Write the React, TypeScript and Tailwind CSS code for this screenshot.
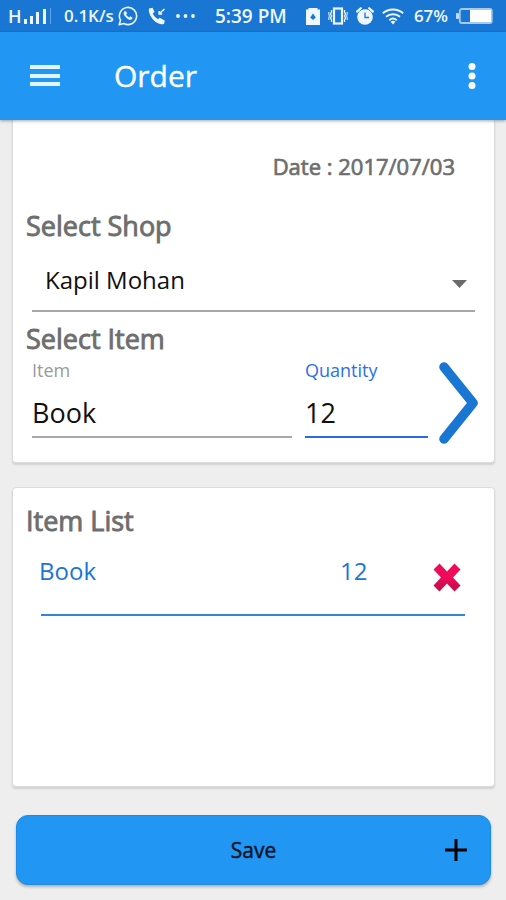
import React, { useState } from "react";

function SignalIcon() {
  return (
    <svg width="30" height="18" viewBox="0 0 30 18" fill="currentColor" aria-hidden="true">
      <rect x="2" y="12" width="3" height="5" />
      <rect x="8" y="9" width="3" height="8" />
      <rect x="14" y="5" width="3" height="12" />
      <rect x="21" y="2" width="3" height="15" />
      <rect x="28" y="1" width="1" height="16" opacity="0.35" />
    </svg>
  );
}

function WhatsAppIcon() {
  return (
    <svg width="20" height="20" viewBox="0 0 20 20" fill="none" stroke="currentColor" aria-hidden="true">
      <path d="M1.2 18.8l1.3-4.6a8.6 8.6 0 1 1 3.3 3.3z" strokeWidth="1.6" strokeLinejoin="round" />
      <path
        d="M6.6 5.4c-1.6 1.5-.6 3.8 1.4 5.9s4.500 3.200 6 1.500l.3-1-2-1.200-1.100 1c-1.500-.6-2.600-1.700-3.200-3.100l.9-1-.9-2.100z"
        fill="currentColor"
        strokeWidth="0.4"
      />
    </svg>
  );
}

function MissedCallIcon() {
  return (
    <svg width="18" height="18" viewBox="0 0 18 18" fill="none" stroke="currentColor" aria-hidden="true">
      <path
        d="M1 1.500L4.500.8l2 4-1.700 1.700c1 2.400 2.800 4.400 5.200 5.700l1.700-1.400 5 2.700-.6 3.200c-1 .8-2.500.8-4 .4C6.500 15.500 1.500 9.500.8 3.500z"
        fill="currentColor"
        stroke="none"
      />
      <path d="M16.500 2L11.500 6.500M11.200 4v3h3" strokeWidth="1.600" />
    </svg>
  );
}

function DataSaverIcon() {
  return (
    <svg width="14" height="18" viewBox="0 0 14 18" aria-hidden="true">
      <path d="M2.500 1h9v1.500H14V18H0V2.500h2.500z" fill="currentColor" />
      <path d="M7 6.500L9.800 10.500 7 13 4.200 10.500z" fill="#1976d2" />
    </svg>
  );
}

function VibrateIcon() {
  return (
    <svg width="20" height="18" viewBox="0 0 20 18" fill="none" stroke="currentColor" aria-hidden="true">
      <rect x="6" y="1.500" width="8" height="15" strokeWidth="2.200" />
      <path d="M3.500 3v2l-1 2 1 2-1 2 1 2v2M16.500 3v2l1 2-1 2 1 2-1 2v2" strokeWidth="1.300" />
      <path d="M.8 5v2l.6 2-.6 2v2M19.200 5v2l-.6 2 .6 2v2" strokeWidth="1" />
    </svg>
  );
}

function AlarmIcon() {
  return (
    <svg width="18" height="18" viewBox="0 0 18 18" fill="none" aria-hidden="true">
      <circle cx="9" cy="10" r="7.800" fill="currentColor" />
      <path d="M1 4.600L4.800 1.200M17 4.600l-3.800-3.400" stroke="currentColor" strokeWidth="2.200" strokeLinecap="round" />
      <path d="M9 5.500V10.500h4" stroke="#1976d2" strokeWidth="1.300" />
    </svg>
  );
}

function WifiIcon() {
  return (
    <svg width="22" height="17" viewBox="0 0 22 17" fill="none" stroke="currentColor" aria-hidden="true">
      <path d="M.8 5.200c5.800-5 14.600-5 20.400 0M4 8.800c4-3.500 10-3.500 14 0M7.300 12.200c2.200-1.900 5.200-1.900 7.400 0" strokeWidth="1.900" />
      <path d="M8.600 13.700c1.500-1.200 3.300-1.200 4.800 0L11 16.500z" fill="currentColor" stroke="none" />
    </svg>
  );
}

function BatteryIcon() {
  return (
    <svg width="37" height="16" viewBox="0 0 37 16" aria-hidden="true">
      <rect x="0" y="5" width="3" height="6" rx="1" fill="#bbdefb" />
      <rect x="3.800" y="1" width="32" height="14" rx="2" fill="none" stroke="#a9c8f0" strokeWidth="1.800" />
      <rect x="14" y="2" width="21" height="12" fill="#fff" />
    </svg>
  );
}

function StatusBar() {
  return (
    <div className="flex h-8 items-center justify-between bg-[#1976d2] pr-[13px] pl-2 text-[17px] font-semibold text-[#eef6ff]">
      <div className="flex items-center">
        <span className="w-3.5 text-lg">H</span>
        <SignalIcon />
        <span className="mr-1 ml-3">0.1K/s</span>
        <WhatsAppIcon />
        <span className="ml-2.5 flex items-center gap-2.5">
          <MissedCallIcon />
          <svg width="20" height="4" viewBox="0 0 20 4" fill="currentColor" aria-hidden="true">
            <circle cx="2" cy="2" r="1.900" />
            <circle cx="9.500" cy="2" r="1.900" />
            <circle cx="17" cy="2" r="1.900" />
          </svg>
        </span>
      </div>
      <span className="text-[19px]">5:39 PM</span>
      <div className="flex items-center gap-2">
        <DataSaverIcon />
        <VibrateIcon />
        <AlarmIcon />
        <WifiIcon />
        <span className="ml-0.5">67%</span>
        <BatteryIcon />
      </div>
    </div>
  );
}

function AppBar() {
  return (
    <header className="z-10 flex h-[88px] items-center bg-[#2196f3] pr-[23px] pl-[30px] text-white shadow-[0_1px_3px_rgba(0,0,0,0.35)]">
      <button type="button" aria-label="Open menu" className="text-[#e3f5ff]">
        <svg width="30" height="22" viewBox="0 0 30 22" fill="currentColor">
          <rect y="0" width="30" height="4" />
          <rect y="9" width="30" height="4" />
          <rect y="17" width="30" height="4" />
        </svg>
      </button>
      <h1 className="ml-[54px] flex-1 text-[30px] leading-10 [-webkit-text-stroke:0.4px]">Order</h1>
      <button type="button" aria-label="More options">
        <svg width="22" height="28" viewBox="0 0 22 28" fill="currentColor">
          <circle cx="11" cy="4.500" r="3.500" />
          <circle cx="11" cy="14" r="3.500" />
          <circle cx="11" cy="23.500" r="3.500" />
        </svg>
      </button>
    </header>
  );
}

const heading = "text-[27px] leading-9 text-[#6e6e6e] [-webkit-text-stroke:0.9px]";
const card = "mr-[11px] ml-3 border border-[#dcdcdc] bg-white shadow-[0_2px_2px_rgba(0,0,0,0.12)]";
const field = "h-[55px] w-full border-b-2 pt-1.5 text-[27px] text-[#111] outline-none";

export default function App() {
  const [item, setItem] = useState("Book");
  const [quantity, setQuantity] = useState("12");
  const items = [{ name: "Book", quantity: 12 }];

  return (
    <div className="flex min-h-screen flex-col bg-[#eeeeee] font-['Open_Sans','Noto_Sans',sans-serif]">
      <StatusBar />
      <AppBar />
      <main className="flex flex-1 flex-col">
        <section className={`${card} rounded-b border-t-0 pt-8 pr-[19px] pb-[17px] pl-[13px]`}>
          <p className="mr-5 text-right text-[22px] leading-7 text-[#6e6e6e] [-webkit-text-stroke:0.7px]">
            Date : 2017/07/03
          </p>
          <h2 className={`${heading} mt-7`}>
            <label htmlFor="shop">Select Shop</label>
          </h2>
          <div className="relative ml-1.5">
            <select
              id="shop"
              className="h-[68px] w-full appearance-none border-b-2 border-[#a8a8a8] pt-1.5 pl-[13px] text-2xl text-[#111] outline-none"
            >
              <option>Kapil Mohan</option>
            </select>
            <svg
              className="pointer-events-none absolute right-2 bottom-6"
              width="15"
              height="8"
              viewBox="0 0 15 8"
              fill="#6b6b6b"
              aria-hidden="true"
            >
              <path d="M0 0h15L7.500 8z" />
            </svg>
          </div>
          <h2 className={`${heading} mt-[9px]`}>Select Item</h2>
          <div className="-mr-1 ml-1.5 flex items-start">
            <div className="min-w-0 flex-1">
              <label htmlFor="item" className="block text-lg leading-[26px] text-[#9a9a9a]">
                Item
              </label>
              <input
                id="item"
                value={item}
                onChange={(e) => setItem(e.target.value)}
                className={`${field} border-[#a8a8a8]`}
              />
            </div>
            <div className="ml-[13px] w-[123px]">
              <label htmlFor="quantity" className="block text-lg leading-[26px] text-[#2a6ff0]">
                Quantity
              </label>
              <input
                id="quantity"
                inputMode="numeric"
                value={quantity}
                onChange={(e) => setQuantity(e.target.value)}
                className={`${field} border-[#2a68ee]`}
              />
            </div>
            <button type="button" aria-label="Add item" className="mt-1 ml-2.5">
              <svg width="41" height="84" viewBox="0 0 41 84" fill="none">
                <path
                  d="M6 6l29 36L6 78"
                  stroke="#1976d2"
                  strokeWidth="9.500"
                  strokeLinecap="round"
                  strokeLinejoin="round"
                />
              </svg>
            </button>
          </div>
        </section>

        <section className={`${card} mt-6 flex-1 rounded pt-[15px] pr-[29px] pb-6 pl-[13px]`}>
          <h2 className={heading}>Item List</h2>
          <ul>
            {items.map((entry) => (
              <li
                key={entry.name}
                className="ml-[15px] flex h-[77px] items-start border-b-2 border-[#3387d2] pt-4 text-2xl leading-8 text-[#1976d2]"
              >
                <span className="-ml-0.5 flex-1">{entry.name}</span>
                <span className="w-[93px]">{entry.quantity}</span>
                <button type="button" aria-label={`Remove ${entry.name}`} className="mt-2 mr-1">
                  <svg width="28" height="29" viewBox="0 0 28 29">
                    <defs>
                      <linearGradient id="cross" x1="0" y1="0" x2="0" y2="1">
                        <stop offset="0.5" stopColor="#f00a5a" />
                        <stop offset="0.8" stopColor="#cc0d4c" />
                      </linearGradient>
                    </defs>
                    <path
                      d="M6.500.5L14 8.500 21.500.5l6 6L20 14.500l7.500 8-6 6L14 20.500l-7.500 8-6-6L8 14.500.5 6.500z"
                      fill="url(#cross)"
                    />
                  </svg>
                </button>
              </li>
            ))}
          </ul>
        </section>

        <button
          type="button"
          className="mt-7 mr-[15px] mb-[15px] ml-4 grid h-[70px] grid-cols-[1fr_auto_1fr] items-center rounded-xl border border-[#1a8ce8] bg-[#2196f3] px-[22px] text-[21px] text-[#06131f] shadow-[0_2px_3px_rgba(0,0,0,0.25)]"
        >
          <span className="col-start-2 pt-0.5 [-webkit-text-stroke:0.4px]">Save</span>
          <svg className="justify-self-end" width="24" height="24" viewBox="0 0 24 24" aria-hidden="true">
            <path d="M12 1v22M1 12h22" stroke="#000" strokeWidth="3" />
          </svg>
        </button>
      </main>
    </div>
  );
}
